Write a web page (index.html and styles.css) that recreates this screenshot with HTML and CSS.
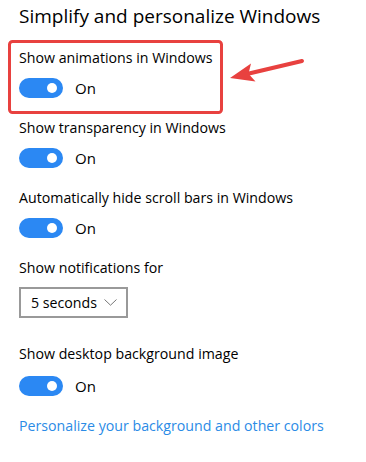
FILE: index.html
```html
<!DOCTYPE html>
<html lang="en">
<head>
<meta charset="utf-8">
<title>Simplify and personalize Windows</title>
<link rel="stylesheet" href="styles.css">
</head>
<body>
<main class="page">
  <h1 class="title">Simplify and personalize Windows</h1>

  <section class="setting">
    <div class="label">Show animations in Windows</div>
    <div class="toggle-row"><span class="toggle"><span class="knob"></span></span><span class="state">On</span></div>
  </section>

  <section class="setting">
    <div class="label">Show transparency in Windows</div>
    <div class="toggle-row"><span class="toggle"><span class="knob"></span></span><span class="state">On</span></div>
  </section>

  <section class="setting">
    <div class="label">Automatically hide scroll bars in Windows</div>
    <div class="toggle-row"><span class="toggle"><span class="knob"></span></span><span class="state">On</span></div>
  </section>

  <section class="setting setting-select">
    <div class="label">Show notifications for</div>
    <div class="select">
      <span class="select-value">5 seconds</span>
      <svg class="chevron" width="13" height="7" viewBox="0 0 13 7"><path d="M0.5 0.5 L6.5 6.2 L12.5 0.5" fill="none" stroke="#777" stroke-width="1"/></svg>
    </div>
  </section>

  <section class="setting setting-bg">
    <div class="label">Show desktop background image</div>
    <div class="toggle-row"><span class="toggle"><span class="knob"></span></span><span class="state">On</span></div>
  </section>

  <a class="link" href="#">Personalize your background and other colors</a>

  <svg class="annotation" width="366" height="462" viewBox="0 0 366 462" aria-hidden="true">
    <rect x="9.5" y="41.5" width="212" height="71" rx="3" ry="3" fill="none" stroke="#e8413f" stroke-width="3"/>
    <line x1="302" y1="61" x2="249" y2="73.5" stroke="#e8413f" stroke-width="4" stroke-linecap="round"/>
    <polygon points="230,78 251,63.5 248.5,73.8 255.5,81.5" fill="#e8413f"/>
  </svg>
</main>
</body>
</html>
```

FILE: styles.css
```css
html, body {
  margin: 0;
  padding: 0;
  background: #ffffff;
}

body {
  font-family: "Open Sans", "Noto Sans", "Liberation Sans", sans-serif;
  color: #000000;
}

.page {
  position: relative;
  width: 366px;
  height: 462px;
  box-sizing: border-box;
  padding: 3px 0 0 19px;
  overflow: hidden;
}

.title {
  margin: 0;
  font-size: 19px;
  line-height: 26px;
  font-weight: 400;
}

.setting {
  display: flex;
  flex-direction: column;
  align-items: flex-start;
  gap: 10px;
  margin-top: 20px;
}

.setting:first-of-type {
  margin-top: 19px;
}

.label {
  font-size: 14.2px;
  line-height: 20px;
}

.toggle-row {
  display: flex;
  align-items: center;
  gap: 12px;
  height: 20px;
}

.toggle {
  position: relative;
  display: block;
  width: 44px;
  height: 20px;
  border-radius: 10px;
  background: #2b88f3;
}

.knob {
  position: absolute;
  top: 5px;
  right: 6px;
  width: 10px;
  height: 10px;
  border-radius: 50%;
  background: #ffffff;
}

.state {
  font-size: 15px;
  line-height: 20px;
}

.setting-select {
  gap: 9px;
}

.select {
  display: flex;
  align-items: center;
  justify-content: space-between;
  box-sizing: border-box;
  width: 109px;
  height: 31px;
  border: 2px solid #999999;
  padding: 0 9px 0 10px;
  font-size: 14.2px;
}

.chevron {
  display: block;
}

.setting-bg {
  margin-top: 26px;
  gap: 12px;
}

.link {
  display: block;
  margin-top: 20px;
  font-size: 14.2px;
  line-height: 20px;
  color: #2b8be6;
  text-decoration: none;
}

.annotation {
  position: absolute;
  left: 0;
  top: 0;
  pointer-events: none;
}
```
